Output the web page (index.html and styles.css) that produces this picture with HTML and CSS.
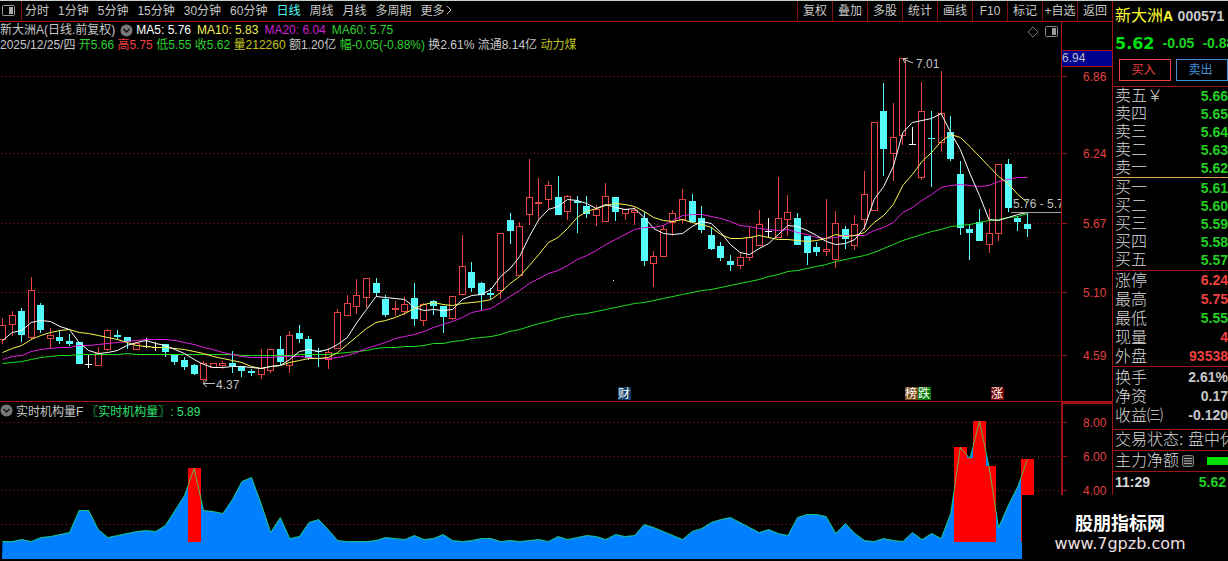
FILE: index.html
```html
<!DOCTYPE html>
<html lang="zh-CN">
<head>
    <meta charset="UTF-8">
    <meta name="viewport" content="width=device-width, initial-scale=1.0">
    <title>新大洲A 000571 日线</title>
    <link rel="stylesheet" href="styles.css">
</head>
<body>

    <div class="screen">
        <main class="main">
            <nav class="toolbar">
                <button class="panel-toggle" aria-label="侧栏">
                    <svg width="13" height="12" viewBox="0 0 13 12"><rect x=".5" y=".5" width="12" height="10" rx="1" fill="none" stroke="#999"/><rect x="7" y="2" width="4" height="7" fill="#aaa"/></svg>
                </button>
                <div class="periods">
                    <button>分时</button>
                    <button>1分钟</button>
                    <button>5分钟</button>
                    <button>15分钟</button>
                    <button>30分钟</button>
                    <button>60分钟</button>
                    <button class="active">日线</button>
                    <button>周线</button>
                    <button>月线</button>
                    <button>多周期</button>
                    <button>更多<svg width="8" height="10" viewBox="0 0 8 10"><path d="M2 1l4 4-4 4" fill="none" stroke="#c0c0c0"/></svg></button>
                </div>
                <div class="tools">
                    <button>复权</button>
                    <button>叠加</button>
                    <button>多股</button>
                    <button>统计</button>
                    <button>画线</button>
                    <button>F10</button>
                    <button>标记</button>
                    <button>+自选</button>
                    <button>返回</button>
                </div>
            </nav>

            <section class="pane">
                <div class="plot">
                    <div class="info">
                        <div class="info-text">
                            <p class="indicators">
                                <span>新大洲A(日线.前复权)</span>
                                <svg class="drop" width="13" height="13" viewBox="0 0 13 13"><circle cx="6.5" cy="6.5" r="6" fill="#777"/><path d="M3.5 5l3 3 3-3" fill="none" stroke="#111" stroke-width="1.5"/></svg>
                                <span class="white">MA5: 5.76</span>
                                <span class="yellow">MA10: 5.83</span>
                                <span class="magenta">MA20: 6.04</span>
                                <span class="green">MA60: 5.75</span>
                            </p>
                            <p>
                                2025/12/25/四
                                <span class="green">开5.66</span>
                                <span class="red">高5.75</span>
                                <span class="green">低5.55</span>
                                <span class="green">收5.62</span>
                                <span class="gold">量212260</span>
                                额1.20亿
                                <span class="green">幅-0.05(-0.88%)</span>
                                换2.61% 流通8.14亿
                                <span class="gold">动力煤</span>
                            </p>
                        </div>
                        <div class="info-icons">
                            <svg width="12" height="12" viewBox="0 0 12 12"><path d="M6 1l5 5-5 5-5-5z" fill="none" stroke="#777"/></svg>
                            <svg width="13" height="12" viewBox="0 0 13 12"><rect x=".5" y=".5" width="12" height="10" rx="1" fill="none" stroke="#888"/><rect x="7" y="2" width="4" height="7" fill="#999"/></svg>
                        </div>
                    </div>
                    <svg id="kline" class="chart" viewBox="0 52 1061 349"></svg>
                </div>
                <svg id="price-axis" class="chart axis" viewBox="0 22 51 379"></svg>
            </section>

            <section class="pane volume">
                <div class="plot">
                    <p class="volume-title">
                        <svg class="drop" width="13" height="13" viewBox="0 0 13 13"><circle cx="6.5" cy="6.5" r="6" fill="#777"/><path d="M3.5 5l3 3 3-3" fill="none" stroke="#111" stroke-width="1.5"/></svg>
                        <span>实时机构量F</span>
                        <span class="mint">〖实时机构量〗: 5.89</span>
                    </p>
                    <svg id="area" class="chart" viewBox="0 418 1061 143"></svg>
                </div>
                <svg id="volume-axis" class="chart axis" viewBox="0 402 51 159"></svg>
            </section>
        </main>

        <aside class="quote">
            <div class="quote-head">
                <h1>新大洲<b>A</b> <span class="code">000571</span></h1>
                <p class="price"><strong>5.62</strong><span>-0.05</span><span>-0.88%</span></p>
                <div class="trade">
                    <button class="buy">买入</button>
                    <button class="sell">卖出</button>
                </div>
            </div>
            <table class="book asks">
                <tr><th>卖五￥</th><td>5.66</td></tr>
                <tr><th>卖四</th><td>5.65</td></tr>
                <tr><th>卖三</th><td>5.64</td></tr>
                <tr><th>卖二</th><td>5.63</td></tr>
                <tr><th>卖一</th><td>5.62</td></tr>
            </table>
            <table class="book bids">
                <tr><th>买一</th><td>5.61</td></tr>
                <tr><th>买二</th><td>5.60</td></tr>
                <tr><th>买三</th><td>5.59</td></tr>
                <tr><th>买四</th><td>5.58</td></tr>
                <tr><th>买五</th><td>5.57</td></tr>
            </table>
            <table class="book stats">
                <tr><th>涨停</th><td class="up">6.24</td></tr>
                <tr><th>最高</th><td class="up">5.75</td></tr>
                <tr><th>最低</th><td>5.55</td></tr>
                <tr><th>现量</th><td class="up">4</td></tr>
                <tr><th>外盘</th><td class="up">93538</td></tr>
            </table>
            <table class="book stats basics">
                <tr><th>换手</th><td>2.61%</td></tr>
                <tr><th>净资</th><td>0.17</td></tr>
                <tr><th>收益㈢</th><td>-0.120</td></tr>
            </table>
            <p class="line state">交易状态: 盘中休</p>
            <p class="line flow">主力净额
                <svg width="12" height="12" viewBox="0 0 12 12"><rect x=".5" y=".5" width="11" height="11" rx="2" fill="#222" stroke="#888"/><path d="M2 3.5h8M2 6h8M2 8.5h8" stroke="#aaa"/></svg>
                <span class="flow-bar"></span>
            </p>
            <p class="line tick"><span>11:29</span><span class="tick-price">5.62</span></p>
        </aside>

        <div class="watermark">
            <strong>股朋指标网</strong>
            <span>www.7gpzb.com</span>
        </div>
    </div>

    <script src="chart.js"></script>
</body>
</html>
```
FILE: styles.css
```css
body {
    margin: 0;
    background-color: #000;
    color: #c8c8c8;
    font-family: "Liberation Sans", "Noto Sans CJK SC", sans-serif;
    font-size: 12px;
}

p, h1 {
    margin: 0;
    font-weight: normal;
}

button {
    padding: 0;
    background: none;
    border: none;
    color: inherit;
    font: inherit;
    cursor: pointer;
}

.screen {
    position: relative;
    display: flex;
    overflow: hidden;
    border-top: 1px solid #c8d0cc;
}

.main {
    flex: 1;
    min-width: 0;
}

/* toolbar */
.toolbar {
    display: flex;
    height: 20px;
    line-height: 20px;
    white-space: nowrap;
    border-bottom: 1px solid #a01414;
}

.panel-toggle {
    display: flex;
    align-items: center;
    justify-content: center;
    width: 22px;
    box-sizing: border-box;
    padding-right: 4px;
    border-right: 1px solid #801010;
}

.periods {
    display: flex;
    flex: 1;
    gap: 9px;
    padding-left: 3px;
}

.periods .active {
    color: #54fcfc;
}

.tools {
    display: flex;
}

.tools button {
    width: 35px;
    box-sizing: border-box;
    border-left: 1px solid #801010;
}

/* chart panes */
.pane {
    display: grid;
    grid-template-columns: 1061fr 51fr;
    border-bottom: 1px solid #a01414;
}

.volume {
    border-bottom: none;
}

.plot {
    min-width: 0;
    overflow: hidden;
}

.chart {
    display: block;
    width: 100%;
}

.chart text {
    font-size: 12px;
}

.info {
    display: flex;
    justify-content: space-between;
    height: 30px;
    white-space: nowrap;
}

.info-text p {
    height: 15px;
    line-height: 17px;
}

.info-icons {
    display: flex;
    gap: 6px;
    padding: 4px 3px 0 0;
}

.indicators,
.volume-title {
    display: flex;
    align-items: center;
    gap: 6px;
}

.info-text .indicators {
    padding-top: 1px;
    height: 14px;
}

.indicators .drop {
    margin: 0 -3px 0 -1px;
}

.volume-title {
    height: 16px;
    gap: 3px;
}

.white { color: #fff; }
.yellow { color: #f0f050; }
.magenta { color: #d020d0; }
.green { color: #30d030; }
.red { color: #f04040; }
.gold { color: #c0c020; }
.mint { color: #30e070; }

/* quote panel */
.quote {
    flex: none;
    width: 116px;
    box-sizing: border-box;
    overflow: hidden;
    border-left: 1px solid #a01414;
    white-space: nowrap;
}

.quote-head {
    height: 85px;
    padding-left: 2px;
    border-bottom: 1px solid #a01414;
}

.quote-head h1 {
    padding-top: 4px;
    color: #ff3;
    font-size: 16px;
    line-height: 22px;
}

.quote-head b {
    font-size: 14px;
}

.code {
    color: #c8c8c8;
    font-size: 14px;
    font-weight: bold;
}

.price {
    display: flex;
    align-items: center;
    gap: 8px;
    height: 32px;
    color: #20d020;
    font-size: 14px;
    font-weight: bold;
}

.price strong {
    color: #00e010;
    font-family: "DejaVu Sans", sans-serif;
    font-size: 16px;
}

.trade {
    display: flex;
    gap: 5px;
    padding-left: 4px;
}

.trade button {
    flex: none;
    width: 52px;
    height: 22px;
    padding-right: 3px;
    line-height: 16px;
    border: 1px solid;
}

.trade .buy {
    color: #f04040;
}

.trade .sell {
    color: #4090d8;
}

.book {
    width: 100%;
    border-collapse: separate;
    border-spacing: 0;
    line-height: 18px;
    border-bottom: 1px solid #a01414;
}

.book th {
    padding: 0 0 0 2px;
    color: #d8d8d8;
    text-align: left;
    font-size: 16px;
    font-weight: 300;
}

.book td {
    padding: 0;
    text-align: right;
    color: #20d020;
    font-size: 14px;
    font-weight: bold;
}

.asks {
    border-bottom-color: #e0a050;
}

.bids {
    padding: 1px 0;
}

.stats {
    line-height: 19px;
}

.book .up {
    color: #f04040;
}

.basics {
    padding: 1px 0 4px;
}

.basics td {
    color: #c8c8c8;
}

.line {
    display: flex;
    align-items: center;
    height: 20px;
    padding-left: 2px;
    color: #d8d8d8;
    font-size: 16px;
    font-weight: 300;
    line-height: 20px;
    border-bottom: 1px solid #a01414;
}

.flow {
    gap: 3px;
}

.flow svg {
    flex: none;
}

.flow-bar {
    flex: none;
    width: 30px;
    height: 8px;
    margin-left: 10px;
    background-color: #00e000;
}

.tick {
    justify-content: space-between;
    padding-right: 2px;
    font-size: 14px;
    font-weight: bold;
    border-bottom: none;
}

.tick-price {
    color: #20d020;
}

.watermark {
    position: absolute;
    right: 0;
    bottom: 0;
    display: flex;
    flex-direction: column;
    align-items: center;
    width: 206px;
    height: 66px;
    box-sizing: border-box;
    padding: 19px 10px 0 0;
    background-color: #000;
    color: #fff;
    font-size: 18px;
    line-height: 20px;
}

.watermark span {
    color: #f0e0e0;
    font-family: "DejaVu Sans", sans-serif;
    font-size: 16px;
}
```
FILE: chart.js
```javascript
const STEP = 9.578;
const RED = "#e84444";
const CYAN = "#54fcfc";

// high, body top, body bottom, low, kind (u = up, d = down, w = flat)
const candles = [
    [318, 325, 339, 344, "u"], [311, 315, 324, 336, "u"], [308, 311, 335, 342, "d"], [277, 290, 337, 340, "u"],
    [303, 305, 330, 333, "d"], [328, 335, 338, 348, "u"], [331, 337, 341, 344, "d"], [334, 341, 344, 346, "d"],
    [342, 342, 364, 364, "d"], [355, 364, 364, 368, "w"], [347, 353, 365, 365, "u"], [329, 330, 349, 351, "u"],
    [330, 335, 337, 339, "d"], [337, 337, 342, 349, "d"], [343, 343, 349, 349, "u"], [338, 346, 346, 348, "w"],
    [342, 347, 347, 351, "w"], [344, 344, 352, 357, "d"], [354, 354, 362, 365, "d"], [357, 360, 367, 370, "d"],
    [364, 365, 374, 375, "d"], [361, 363, 379, 382, "u"], [363, 363, 367, 367, "u"], [361, 363, 365, 369, "u"],
    [351, 363, 366, 373, "d"], [366, 366, 371, 377, "d"], [369, 371, 373, 376, "d"], [349, 368, 374, 379, "u"],
    [349, 349, 370, 373, "u"], [336, 349, 362, 365, "d"], [331, 335, 365, 373, "u"], [325, 333, 339, 343, "d"],
    [336, 339, 358, 360, "d"], [348, 351, 352, 367, "d"], [348, 352, 359, 369, "u"], [309, 312, 348, 349, "u"],
    [295, 303, 315, 315, "u"], [279, 295, 306, 314, "u"], [278, 278, 297, 308, "u"], [278, 283, 293, 296, "d"],
    [295, 299, 315, 317, "d"], [301, 308, 309, 316, "u"], [297, 304, 311, 315, "u"], [283, 298, 319, 326, "d"],
    [303, 304, 320, 326, "u"], [300, 301, 306, 315, "d"], [306, 306, 317, 333, "d"], [296, 296, 318, 320, "u"],
    [235, 266, 294, 294, "u"], [262, 272, 288, 292, "d"], [282, 283, 295, 310, "d"], [288, 293, 295, 299, "d"],
    [233, 233, 290, 299, "u"], [213, 220, 231, 244, "d"], [222, 226, 275, 275, "u"], [159, 197, 214, 225, "u"],
    [178, 202, 203, 219, "u"], [181, 185, 199, 209, "u"], [176, 197, 215, 215, "d"], [195, 196, 211, 220, "u"],
    [196, 201, 203, 233, "d"], [196, 206, 214, 218, "d"], [205, 209, 215, 226, "u"], [183, 196, 221, 221, "u"],
    [197, 197, 212, 221, "d"], [209, 209, 213, 220, "u"], [207, 210, 212, 225, "u"], [212, 218, 261, 266, "d"],
    [251, 256, 263, 287, "u"], [225, 229, 256, 256, "u"], [210, 213, 222, 236, "u"], [189, 199, 219, 223, "u"],
    [194, 201, 222, 223, "d"], [206, 218, 230, 233, "d"], [227, 235, 249, 250, "d"], [242, 246, 258, 261, "d"],
    [255, 261, 265, 271, "d"], [252, 257, 265, 269, "u"], [227, 237, 257, 261, "u"], [210, 224, 245, 245, "u"],
    [218, 231, 231, 238, "w"], [177, 218, 237, 237, "u"], [195, 212, 219, 236, "u"], [213, 218, 245, 245, "d"],
    [236, 236, 253, 265, "d"], [242, 247, 252, 256, "d"], [199, 249, 251, 256, "u"], [211, 223, 259, 268, "u"],
    [226, 229, 239, 249, "d"], [215, 224, 245, 250, "u"], [171, 194, 219, 230, "u"], [122, 122, 210, 211, "u"],
    [83, 111, 149, 176, "d"], [103, 137, 153, 181, "u"], [58, 58, 135, 145, "u"], [127, 144, 144, 145, "w"],
    [82, 111, 177, 180, "u"], [111, 138, 139, 187, "d"], [71, 113, 142, 151, "u"], [116, 132, 159, 161, "d"],
    [161, 174, 228, 235, "d"], [224, 229, 233, 260, "d"], [209, 222, 241, 241, "d"], [209, 233, 244, 253, "u"],
    [164, 164, 233, 241, "u"], [159, 164, 208, 212, "d"], [216, 218, 222, 231, "d"], [213, 224, 229, 237, "d"]
];

const averages = {
    "#20e020": [
        363, 362, 361, 359, 357, 356, 355, 355, 354, 354, 354, 354, 354, 353, 354, 354, 354, 354, 354, 354,
        354, 354, 354, 354, 354, 355, 355, 355, 355, 355, 355, 354, 354, 354, 354, 353, 352, 351, 350, 348,
        347, 347, 346, 346, 345, 343, 343, 341, 340, 338, 337, 336, 334, 331, 329, 326, 323, 321, 318, 316,
        314, 313, 311, 309, 307, 305, 303, 302, 300, 298, 296, 294, 292, 290, 289, 287, 285, 283, 281, 279,
        276, 274, 271, 270, 268, 266, 264, 261, 259, 257, 255, 252, 248, 244, 240, 237, 234, 231, 229, 226,
        225, 224, 222, 220, 219, 217, 216, 213
    ],
    "#e020e0": [
        359, 356, 355, 351, 349, 348, 347, 347, 345, 345, 344, 343, 342, 341, 340, 339, 339, 339, 340, 342,
        344, 347, 349, 352, 354, 356, 357, 357, 357, 356, 356, 356, 357, 358, 358, 357, 355, 352, 348, 345,
        342, 338, 336, 334, 331, 327, 324, 321, 317, 312, 310, 308, 302, 296, 290, 283, 278, 273, 270, 265,
        259, 255, 250, 244, 239, 234, 229, 227, 227, 225, 220, 215, 214, 214, 216, 218, 221, 225, 226, 228,
        229, 230, 229, 232, 234, 237, 238, 237, 235, 235, 235, 230, 227, 222, 212, 207, 200, 194, 187, 185,
        184, 185, 186, 185, 181, 179, 177, 177
    ],
    "#f8f850": [
        352, 348, 345, 339, 335, 332, 330, 329, 332, 333, 335, 337, 339, 342, 345, 346, 347, 347, 348, 349,
        351, 353, 356, 358, 360, 362, 366, 368, 366, 365, 362, 360, 358, 358, 357, 352, 344, 336, 328, 322,
        320, 317, 313, 308, 304, 302, 304, 305, 303, 302, 301, 299, 292, 283, 276, 265, 254, 242, 237, 228,
        217, 211, 208, 205, 203, 204, 206, 211, 217, 220, 221, 219, 222, 224, 227, 234, 238, 238, 237, 235,
        237, 239, 239, 240, 241, 240, 238, 234, 236, 235, 232, 222, 215, 204, 185, 174, 161, 152, 141, 134,
        137, 146, 156, 166, 176, 183, 194, 202
    ],
    "#ffffff": [
        340, 332, 330, 322, 320, 321, 326, 329, 342, 350, 353, 352, 350, 345, 342, 340, 343, 345, 349, 353,
        359, 364, 367, 367, 366, 366, 367, 368, 366, 365, 359, 351, 349, 351, 349, 344, 337, 322, 309, 296,
        297, 298, 299, 307, 310, 309, 310, 309, 299, 295, 294, 289, 276, 268, 256, 236, 219, 209, 206, 199,
        200, 203, 208, 204, 207, 209, 208, 217, 228, 233, 234, 233, 226, 221, 223, 232, 244, 252, 254, 248,
        243, 234, 225, 226, 230, 235, 241, 244, 243, 239, 227, 199, 186, 166, 132, 122, 120, 118, 113, 132,
        149, 173, 195, 219, 220, 217, 214, 212
    ]
};

const flow = [
    541, 541, 539, 541, 537, 536, 534, 532, 510, 510, 529, 537, 535, 533, 531, 530, 531, 525, 510, 495,
    468, 510, 511, 513, 499, 481, 477, 503, 532, 517, 538, 536, 522, 519, 529, 540, 541, 541, 541, 540,
    537, 538, 539, 535, 539, 538, 534, 540, 541, 540, 538, 538, 541, 540, 541, 540, 539, 541, 536, 539,
    537, 535, 536, 539, 534, 536, 535, 524, 527, 531, 535, 539, 531, 528, 522, 519, 517, 522, 527, 532,
    529, 533, 535, 517, 514, 514, 516, 533, 523, 533, 540, 541, 538, 540, 541, 532, 539, 533, 538, 513,
    447, 458, 421, 466, 527, 505, 486, 459
];
const alerts = [20, 100, 101, 102, 103, 107];

function xAt(i) {
    return 2.5 + i * STEP;
}

function rect(x, y, w, h, attrs) {
    return `<rect x="${x}" y="${y}" width="${w}" height="${h}" ${attrs}/>`;
}

function label(x, y, text, color) {
    return `<text x="${x}" y="${y}" fill="${color}">${text}</text>`;
}

function points(values) {
    return values.map((y, i) => `${xAt(i).toFixed(1)},${y + 0.5}`).join(" ");
}

function gridLine(y) {
    return `<path d="M2 ${y + 0.5}H1061" stroke="#802020" stroke-dasharray="1 3"/>`;
}

function drawCandle(c, i) {
    const [high, top, bottom, low, kind] = c;
    const x = Math.floor(xAt(i));
    const color = { u: RED, d: CYAN, w: "#fff" }[kind];
    let out = "";
    if (top > high) out += rect(x, high, 1, top - high, `fill="${color}"`);
    if (low > bottom) out += rect(x, bottom, 1, low - bottom, `fill="${color}"`);
    if (kind === "u") {
        out += rect(x - 2.5, top + 0.5, 6, Math.max(bottom - top, 1), `fill="none" stroke="${color}"`);
    } else {
        out += rect(x - 3, top, 7, Math.max(bottom - top, 1), `fill="${color}"`);
    }
    return out;
}

function tag(x, text, bg) {
    return rect(x, 387, 13, 13, `fill="${bg}"`) + label(x, 398, text, "#fff");
}

function drawKline() {
    let out = [76, 153, 223, 292, 355].map(gridLine).join("");
    out += `<g shape-rendering="crispEdges">${candles.map(drawCandle).join("")}</g>`;
    for (const color in averages) {
        out += `<polyline points="${points(averages[color])}" fill="none" stroke="${color}"/>`;
    }
    out += `<path d="M903 59l10 4M903 59l2 4M903 59l5-1M203 383.500h12M207 380l-4 3.500 4 3.500" fill="none" stroke="#c0c0c0"/>`;
    out += label(916, 68, "7.01", "#c0c0c0") + label(216, 389, "4.37", "#c0c0c0");
    out += `<path d="M1011 212.500H1061" stroke="#a0a0a0"/>` + label(1013, 208, "5.76 - 5.7", "#c0c0c0");
    out += rect(613, 280, 1, 1, `fill="#fff"`);
    out += tag(618, "财", "#103c68") + tag(905, "榜", "#784614") + tag(918, "跌", "#087808") + tag(991, "涨", "#780808");
    document.getElementById("kline").innerHTML = out;
}

function drawArea() {
    let out = [422, 456, 490, 524].map(gridLine).join("");
    out += `<polygon points="2,559 ${points(flow)} 1027,559" fill="#0080ff"/>`;
    alerts.forEach(i => {
        out += rect(Math.round(xAt(i) - 6), flow[i], 13, 542 - flow[i], `fill="#f00"`);
    });
    out += `<polyline points="${points(flow)}" fill="none" stroke="#20ff80" stroke-opacity=".7"/>`;
    document.getElementById("area").innerHTML = out;
}

function axisTicks(ticks) {
    return ticks.map(([y, text]) =>
        `<path d="M1 ${y + 0.5}h5" stroke="#a01414"/>` + label(22, y + 5, text, "#e04040")).join("");
}

function drawAxes() {
    let out = `<path d="M.5 22V401" stroke="#a01414"/>`;
    out += rect(1, 51, 50, 15, `fill="#000090"`) + `<path d="M1 50.500H51M1 66.500H51" stroke="#a01414"/>`;
    out += label(1, 62, "6.94", "#c0c0c0");
    out += axisTicks([[76, "6.86"], [153, "6.24"], [223, "5.67"], [292, "5.10"], [355, "4.59"]]);
    document.getElementById("price-axis").innerHTML = out;

    out = `<path d="M1 561V403H51" fill="none" stroke="#a01414" stroke-width="2"/>`;
    out += axisTicks([[422, "8.00"], [456, "6.00"], [490, "4.00"]]);
    document.getElementById("volume-axis").innerHTML = out;
}

drawKline();
drawArea();
drawAxes();
```
